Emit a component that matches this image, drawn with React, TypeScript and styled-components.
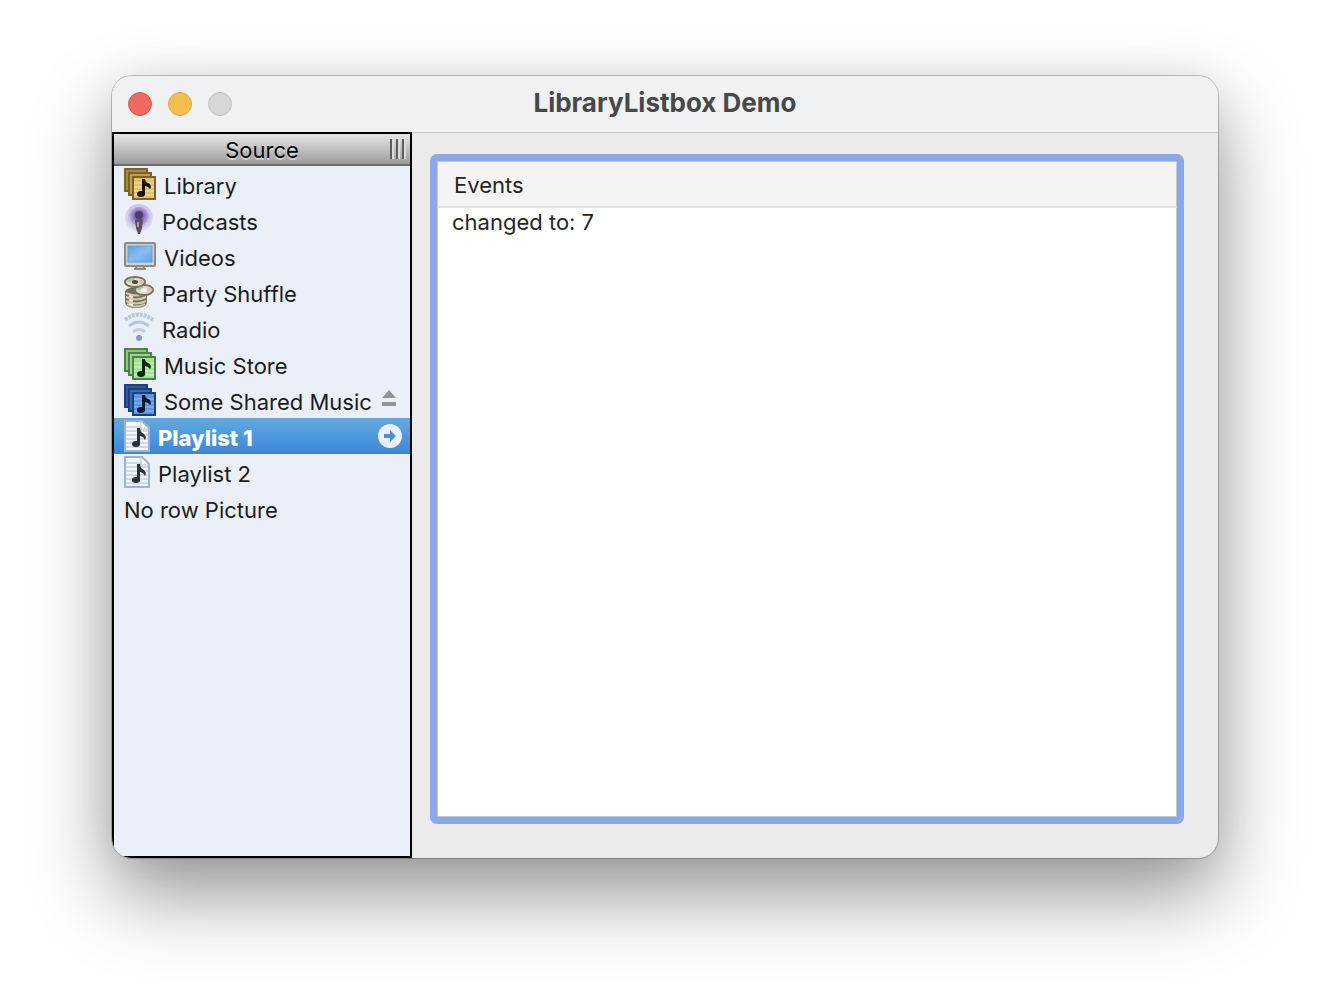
import React, { useState } from "react";
import styled, { createGlobalStyle, css } from "styled-components";

const GlobalStyle = createGlobalStyle`
  *, *::before, *::after { box-sizing: border-box; }
  body {
    margin: 0;
    background: #ffffff;
    font-family: Inter, "Liberation Sans", sans-serif;
    color: #262626;
  }
  button { font: inherit; color: inherit; }
`;

const Desktop = styled.div`
  display: flex;
  min-height: 100vh;
  padding: 76px 112px 148px;
`;

const Window = styled.main`
  flex: 1;
  display: flex;
  flex-direction: column;
  min-width: 0;
  border-radius: 20px;
  overflow: hidden;
  background: #ebebeb;
  box-shadow: 0 0 0 1px rgba(0, 0, 0, 0.22), 0 36px 80px rgba(0, 0, 0, 0.42), 0 0 40px rgba(0, 0, 0, 0.06);
`;

const TitleBar = styled.header`
  display: grid;
  grid-template-columns: 1fr auto 1fr;
  align-items: center;
  height: 56px;
  padding: 0 16px;
  background: #eff1f3;
`;

const Controls = styled.div`
  display: flex;
  gap: 16px;
`;

const WindowButton = styled.button<{ $fill: string; $edge: string }>`
  width: 24px;
  height: 24px;
  padding: 0;
  border: 1px solid ${(p) => p.$edge};
  border-radius: 50%;
  background: ${(p) => p.$fill};
`;

const Title = styled.h1`
  margin: 0;
  padding-bottom: 2px;
  font-size: 26px;
  line-height: 32px;
  font-weight: 700;
  color: #484848;
`;

const Content = styled.div`
  flex: 1;
  display: flex;
  min-height: 0;
`;

const Sidebar = styled.nav`
  flex: 0 0 300px;
  border: 2px solid #000000;
  background: #eaeff8;
`;

const SidebarHeader = styled.div`
  display: grid;
  grid-template-columns: 1fr auto 1fr;
  align-items: center;
  height: 32px;
  padding: 0 6px;
  border-bottom: 2px solid #6e6e6e;
  background: linear-gradient(#e6e6e6, #9c9c9c);
`;

const SidebarTitle = styled.h2`
  grid-column: 2;
  margin: 0;
  padding-top: 2px;
  font-size: 22px;
  line-height: 28px;
  font-weight: 400;
  color: #000000;
  text-shadow: 0 2px 0 rgba(255, 255, 255, 0.45);
`;

const Grip = styled.span`
  justify-self: end;
  display: flex;
  gap: 4px;
`;

const GripLine = styled.span`
  width: 2px;
  height: 20px;
  background: #5e5e5e;
  box-shadow: 2px 0 0 #dcdcdc;
`;

const SourceList = styled.ul`
  margin: 0;
  padding: 0;
  list-style: none;
`;

const SourceRow = styled.li<{ $selected: boolean }>`
  display: flex;
  align-items: center;
  height: 36px;
  padding: 0 8px 0 10px;
  color: #1c1c1c;
  ${(p) =>
    p.$selected &&
    css`
      background: linear-gradient(#63aae2, #3a87d8);
      color: #ffffff;
      font-weight: 800;
    `}
`;

const SourceButton = styled.button`
  flex: 1;
  display: flex;
  align-items: center;
  gap: 8px;
  height: 36px;
  padding: 0;
  border: 0;
  background: none;
  text-align: left;
  white-space: nowrap;
`;

const SourceLabel = styled.span`
  padding-top: 4px;
  font-size: 22px;
  line-height: 28px;
`;

const RowAction = styled.button`
  display: flex;
  padding: 0;
  border: 0;
  background: none;
`;

const Main = styled.section`
  flex: 1;
  display: flex;
  min-width: 0;
  padding: 21px 34px 34px 18px;
  border-top: 1px solid #c6c7c8;
`;

const EventsBox = styled.div`
  flex: 1;
  min-width: 0;
  border: 7px solid #8ba8ec;
  border-radius: 7px;
  background: #ffffff;
  box-shadow: inset 0 0 0 1px #c4c8d4;
`;

const EventsTable = styled.table`
  width: 100%;
  border-collapse: separate;
  border-spacing: 0;
  text-align: left;
`;

const EventsHead = styled.th`
  height: 47px;
  padding: 2px 16px 0;
  border: 1px solid #c4c8d4;
  border-bottom: 2px solid #e2e2e2;
  background: #f4f4f4;
  font-size: 22px;
  line-height: 28px;
  font-weight: 400;
`;

const EventCell = styled.td`
  padding: 0 15px;
  font-size: 22px;
  line-height: 28px;
`;

function Note({ ink }: { ink: string }) {
  return (
    <g fill={ink}>
      <path d="M18 11h3l1 3 4 2 1 3-1 2-2-2-3-1v9h-3z" />
      <ellipse cx="17" cy="26" rx="4" ry="3" />
    </g>
  );
}

function Albums({ colors, ink }: { colors: string[]; ink: string }) {
  const [back, mid, front, line, edge] = colors;
  return (
    <svg width="32" height="32" viewBox="0 0 32 32" aria-hidden="true">
      <rect x="1" y="1" width="22" height="22" fill={back} stroke={edge} strokeWidth="2" />
      <rect x="5" y="5" width="22" height="22" fill={mid} stroke={edge} strokeWidth="2" />
      <rect x="9" y="9" width="22" height="22" fill={front} stroke={edge} strokeWidth="2" />
      <path d="M10 15h20M10 19h20M10 23h20M10 27h20" stroke={line} strokeWidth="2" />
      <Note ink={ink} />
    </svg>
  );
}

function PodcastIcon() {
  return (
    <svg width="30" height="32" viewBox="0 0 30 32" aria-hidden="true">
      <defs>
        <radialGradient id="podcast-glow" cx="50%" cy="42%" r="54%">
          <stop offset="0" stopColor="#5c35a0" />
          <stop offset="0.35" stopColor="#8e6cc4" />
          <stop offset="0.6" stopColor="#c0b0e0" />
          <stop offset="0.85" stopColor="#d9d5ee" />
          <stop offset="1" stopColor="#e2e3f3" />
        </radialGradient>
      </defs>
      <circle cx="15" cy="14" r="14" fill="url(#podcast-glow)" />
      <circle cx="15" cy="14" r="12" fill="none" stroke="#d8d0ec" strokeWidth="1" />
      <circle cx="15" cy="13" r="8" fill="none" stroke="#a48cd2" strokeWidth="1" />
      <circle cx="15" cy="11" r="4" fill="#4f3a68" />
      <path d="M11 16q4-3 8 0l-1 8-2 6h-2l-2-6z" fill="#5b4c62" />
      <path d="M13 18h2v5h-2z" fill="#a79bb0" />
    </svg>
  );
}

function VideoIcon() {
  return (
    <svg width="32" height="32" viewBox="0 0 32 32" aria-hidden="true">
      <defs>
        <linearGradient id="video-screen" x1="0" y1="0" x2="1" y2="1">
          <stop offset="0" stopColor="#5f9fe2" />
          <stop offset="0.5" stopColor="#8abcf0" />
          <stop offset="1" stopColor="#64a2e6" />
        </linearGradient>
      </defs>
      <path d="M11 26h10v2h1v2H10v-2h1z" fill="#8a8a8a" />
      <rect x="1" y="3" width="30" height="23" rx="1" fill="#d0d0cf" stroke="#8b8b8b" strokeWidth="2" />
      <rect x="4" y="6" width="24" height="16" fill="url(#video-screen)" stroke="#6b9fd6" strokeWidth="1" />
      <path d="M13 27h6v1h-6z" fill="#c9c9c7" />
    </svg>
  );
}

function ShuffleIcon() {
  return (
    <svg width="30" height="32" viewBox="0 0 30 32" aria-hidden="true">
      <path d="M1 16q0-3 5-4h12q5 1 5 4v11q-2 5-11 5T1 27z" fill="#716c5c" />
      <g fill="none" stroke="#d3cdb0" strokeWidth="2">
        <path d="M2 17q10 5 20 0" />
        <path d="M2 21q10 5 20 0" />
        <path d="M2 25q10 5 20 0" />
        <path d="M3 28q9 5 18 0" />
      </g>
      <path d="M5 20l4 1M5 24l4 1M5 28l4 1" stroke="#f6efcf" strokeWidth="2" />
      <ellipse cx="20" cy="14" rx="9" ry="5" fill="#e3dfd0" stroke="#77715f" strokeWidth="2" />
      <ellipse cx="11" cy="6" rx="10" ry="5" fill="#e3dfd0" stroke="#77715f" strokeWidth="2" />
      <path d="M3 6q2-4 7-4l1 4zM13 14q1-3 6-4l1 4z" fill="#a9c5a4" />
      <path d="M12 6l6-3q3 2 0 5zM21 14l5-3q3 2 0 5z" fill="#dec3a8" />
      <ellipse cx="11" cy="6" rx="3" ry="2" fill="#4f4b44" />
      <ellipse cx="20" cy="14" rx="3" ry="2" fill="#f6f5ec" />
    </svg>
  );
}

function RadioIcon() {
  return (
    <svg width="30" height="32" viewBox="0 0 30 32" aria-hidden="true">
      <g fill="none">
        <path d="M1 8q14-11 28 0" stroke="#b6c8e3" strokeWidth="4" strokeDasharray="3 1" />
        <path d="M5 14q10-8 20 0" stroke="#b6c8e3" strokeWidth="3" />
        <path d="M9 20q6-5 12 0" stroke="#bccde6" strokeWidth="3" />
      </g>
      <circle cx="15" cy="26" r="3" fill="#7d9fcb" />
    </svg>
  );
}

function PlaylistIcon() {
  return (
    <svg width="26" height="32" viewBox="0 0 26 32" aria-hidden="true">
      <path d="M1 1h17l7 7v23H1z" fill="#f4f8fd" stroke="#9db5d3" strokeWidth="2" />
      <path d="M2 7h15M2 11h22M2 15h22M2 19h22M2 23h22M2 27h22" stroke="#c9dbf0" strokeWidth="2" />
      <path d="M17 1v8h8z" fill="#ffffff" stroke="#b5bfca" strokeWidth="1" />
      <path d="M13 8h3l1 4 3 2 2 3-1 3-2-3-3-1v8h-3z" fill="#2b3138" />
      <ellipse cx="12" cy="24" rx="4" ry="3" fill="#2b3138" />
    </svg>
  );
}

function EjectIcon() {
  return (
    <svg width="24" height="24" viewBox="0 0 24 24" aria-hidden="true">
      <path d="M11 2l7 8H4zM4 14h14v4H4z" fill="#949494" />
    </svg>
  );
}

function ArrowIcon() {
  return (
    <svg width="24" height="24" viewBox="0 0 24 24" aria-hidden="true">
      <circle cx="12" cy="12" r="12" fill="#e9f1fb" />
      <path d="M6 10h6V6l6 6-6 6v-4H6z" fill="#4591dc" />
    </svg>
  );
}

const gold = ["#a68a42", "#bea04a", "#dfc070", "#ecd48c", "#7d6228"];
const green = ["#84cc7c", "#92d888", "#9fe492", "#b6efac", "#4f7f4e"];
const blue = ["#2c5ba8", "#3468b8", "#5a96e4", "#74aaee", "#203f78"];

const sources = [
  { name: "Library", icon: <Albums colors={gold} ink="#17130a" /> },
  { name: "Podcasts", icon: <PodcastIcon /> },
  { name: "Videos", icon: <VideoIcon /> },
  { name: "Party Shuffle", icon: <ShuffleIcon /> },
  { name: "Radio", icon: <RadioIcon /> },
  { name: "Music Store", icon: <Albums colors={green} ink="#10240f" /> },
  { name: "Some Shared Music", icon: <Albums colors={blue} ink="#0b142c" />, action: "Eject" },
  { name: "Playlist 1", icon: <PlaylistIcon />, action: "Open" },
  { name: "Playlist 2", icon: <PlaylistIcon /> },
  { name: "No row Picture" },
];

export default function App() {
  const [selected, setSelected] = useState(7);
  const [events, setEvents] = useState(["changed to: 7"]);

  const select = (index: number) => {
    if (index === selected) return;
    setSelected(index);
    setEvents((list) => [...list, `changed to: ${index}`]);
  };

  return (
    <Desktop>
      <GlobalStyle />
      <Window>
        <TitleBar>
          <Controls>
            <WindowButton aria-label="Close" $fill="#ed6a5e" $edge="#d9574b" />
            <WindowButton aria-label="Minimize" $fill="#f5bf4f" $edge="#dca73a" />
            <WindowButton aria-label="Zoom" disabled $fill="#d5d7d9" $edge="#bcbec0" />
          </Controls>
          <Title>LibraryListbox Demo</Title>
        </TitleBar>
        <Content>
          <Sidebar aria-label="Source">
            <SidebarHeader>
              <SidebarTitle>Source</SidebarTitle>
              <Grip>
                <GripLine />
                <GripLine />
                <GripLine />
              </Grip>
            </SidebarHeader>
            <SourceList>
              {sources.map((source, index) => (
                <SourceRow key={source.name} $selected={index === selected}>
                  <SourceButton aria-pressed={index === selected} onClick={() => select(index)}>
                    {source.icon}
                    <SourceLabel>{source.name}</SourceLabel>
                  </SourceButton>
                  {source.action && (
                    <RowAction aria-label={`${source.action} ${source.name}`}>
                      {source.action === "Eject" ? <EjectIcon /> : <ArrowIcon />}
                    </RowAction>
                  )}
                </SourceRow>
              ))}
            </SourceList>
          </Sidebar>
          <Main>
            <EventsBox>
              <EventsTable>
                <thead>
                  <tr>
                    <EventsHead scope="col">Events</EventsHead>
                  </tr>
                </thead>
                <tbody>
                  {events.map((event, index) => (
                    <tr key={index}>
                      <EventCell>{event}</EventCell>
                    </tr>
                  ))}
                </tbody>
              </EventsTable>
            </EventsBox>
          </Main>
        </Content>
      </Window>
    </Desktop>
  );
}
